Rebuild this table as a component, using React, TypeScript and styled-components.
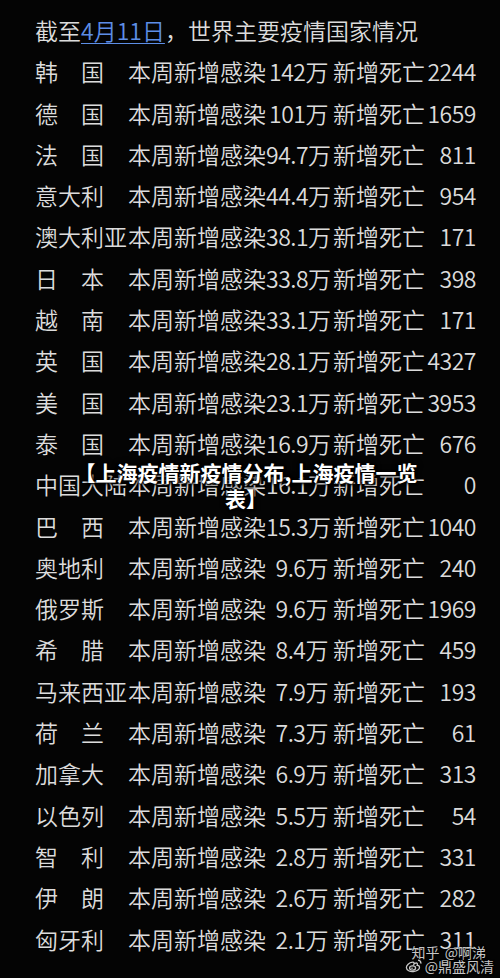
import styled, { createGlobalStyle } from "styled-components";

const GlobalStyle = createGlobalStyle`
  html, body {
    margin: 0;
    padding: 0;
    background: #040404;
  }
  body {
    font-family: "Noto Sans CJK SC", "Noto Sans", sans-serif;
  }
`;

const StyledPage = styled.main`
  position: relative;
  width: 500px;
  height: 978px;
  overflow: hidden;
  background: #040404;
  color: #dcdcdc;
  font-size: 23px;
  font-weight: 350;
  padding: 10px 0 0 35px;
  box-sizing: border-box;
`;

const StyledHeading = styled.div`
  height: 41.3px;
  line-height: 41px;
  white-space: nowrap;
`;

const StyledDate = styled.span`
  color: #5d8ee6;
  text-decoration: underline;
  text-decoration-thickness: 1px;
  text-underline-offset: 3px;
`;

const StyledRow = styled.div`
  display: grid;
  grid-template-columns: 93px 138px 62px 97px 51px;
  height: 41.3px;
  line-height: 41px;
  white-space: nowrap;
`;

const StyledNumber = styled.span`
  text-align: right;
  letter-spacing: -0.5px;
`;

const StyledDeathLabel = styled.span`
  padding-left: 5px;
`;

const StyledOverlay = styled.div`
  position: absolute;
  inset: 0;
  display: flex;
  align-items: center;
  justify-content: center;
  pointer-events: none;
`;

const StyledOverlayTitle = styled.h1`
  margin: -8px 0 0 -8px;
  width: 352px;
  text-align: center;
  font-size: 21px;
  font-weight: 700;
  line-height: 26px;
  color: #ffffff;
  text-shadow: 0 0 3px #000, 0 0 6px #000, 1px 1px 2px #000;
`;

const StyledWatermark = styled.div`
  position: absolute;
  right: 8px;
  bottom: 5px;
  display: flex;
  flex-direction: column;
  align-items: flex-end;
  font-size: 14px;
  font-weight: 400;
  line-height: 14px;
  color: rgba(235, 235, 235, 0.85);
  text-shadow: 0 0 1px #000, 0 0 2px #000;
`;

const StyledZhihu = styled.span`
  margin-right: 6px;
  word-spacing: 2px;
`;

const StyledWeibo = styled.span`
  display: flex;
  align-items: center;
  gap: 2px;
  margin-right: -2px;
  & svg {
    width: 18px;
    height: 14px;
  }
`;

type Row = { country: string; amount: string; deaths: string };

const rows: Row[] = [
  { country: "韩　国", amount: "142万", deaths: "2244" },
  { country: "德　国", amount: "101万", deaths: "1659" },
  { country: "法　国", amount: "94.7万", deaths: "811" },
  { country: "意大利", amount: "44.4万", deaths: "954" },
  { country: "澳大利亚", amount: "38.1万", deaths: "171" },
  { country: "日　本", amount: "33.8万", deaths: "398" },
  { country: "越　南", amount: "33.1万", deaths: "171" },
  { country: "英　国", amount: "28.1万", deaths: "4327" },
  { country: "美　国", amount: "23.1万", deaths: "3953" },
  { country: "泰　国", amount: "16.9万", deaths: "676" },
  { country: "中国大陆", amount: "16.1万", deaths: "0" },
  { country: "巴　西", amount: "15.3万", deaths: "1040" },
  { country: "奥地利", amount: "9.6万", deaths: "240" },
  { country: "俄罗斯", amount: "9.6万", deaths: "1969" },
  { country: "希　腊", amount: "8.4万", deaths: "459" },
  { country: "马来西亚", amount: "7.9万", deaths: "193" },
  { country: "荷　兰", amount: "7.3万", deaths: "61" },
  { country: "加拿大", amount: "6.9万", deaths: "313" },
  { country: "以色列", amount: "5.5万", deaths: "54" },
  { country: "智　利", amount: "2.8万", deaths: "331" },
  { country: "伊　朗", amount: "2.6万", deaths: "282" },
  { country: "匈牙利", amount: "2.1万", deaths: "311" },
];

const WeiboLogo = () => (
  <svg viewBox="0 0 18 14" fill="none" stroke="currentColor" strokeWidth="1.3">
    <path d="M7.5 3.2C4.2 3.6 1.2 6.2 1.4 8.8c.2 2.6 3.4 4 7 3.7 3.8-.3 6.3-2.2 6.1-4.3-.1-1.3-1.3-1.900-2.3-1.9.6-1.4.2-2.6-1.6-2.2-.8.2-1.3.6-1.6.9.4-1.4-.3-2-1.5-1.8z" />
    <ellipse cx="7.6" cy="9" rx="3" ry="2.1" />
    <circle cx="7" cy="9.2" r="0.8" fill="currentColor" stroke="none" />
    <path d="M13 1.2c1.8.2 3 1.6 2.9 3.4" />
  </svg>
);

const App = () => {
  return (
    <>
      <GlobalStyle />
      <StyledPage>
        <StyledHeading>
          截至<StyledDate>4月11日</StyledDate>，世界主要疫情国家情况
        </StyledHeading>
        {rows.map((r) => (
          <StyledRow key={r.country}>
            <span>{r.country}</span>
            <span>本周新增感染</span>
            <StyledNumber>{r.amount}</StyledNumber>
            <StyledDeathLabel>新增死亡</StyledDeathLabel>
            <StyledNumber>{r.deaths}</StyledNumber>
          </StyledRow>
        ))}
        <StyledOverlay>
          <StyledOverlayTitle>【上海疫情新疫情分布,上海疫情一览表】</StyledOverlayTitle>
        </StyledOverlay>
        <StyledWatermark>
          <StyledZhihu>知乎 @啊涕</StyledZhihu>
          <StyledWeibo>
            <WeiboLogo />
            @鼎盛风清
          </StyledWeibo>
        </StyledWatermark>
      </StyledPage>
    </>
  );
};

export default App;
